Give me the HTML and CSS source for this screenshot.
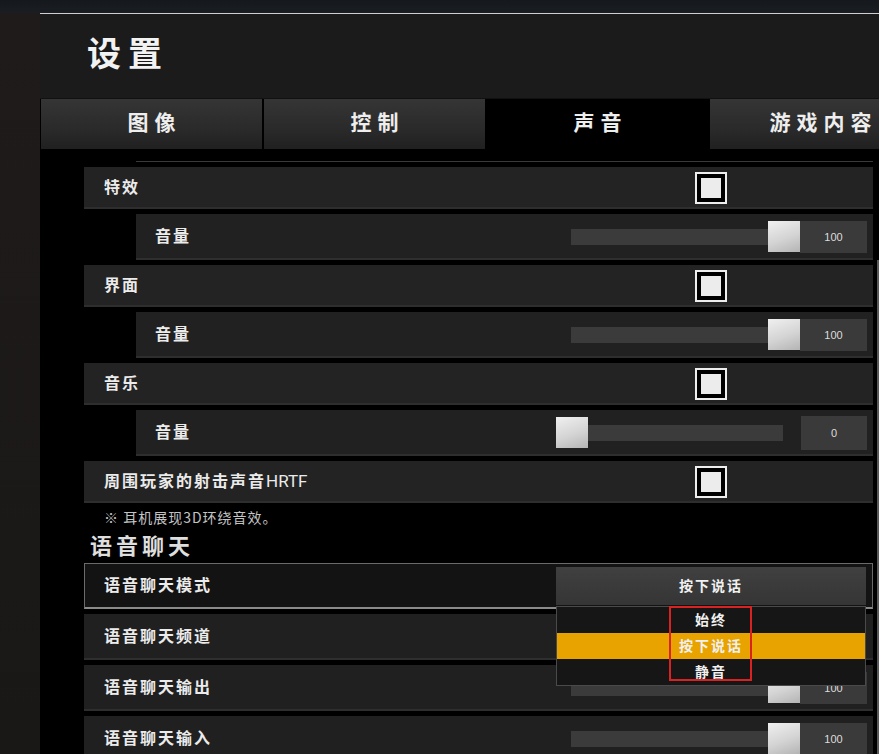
FILE: index.html
```html
<!DOCTYPE html>
<html lang="zh-CN">

<head>
  <meta charset='utf-8'>
  <title>设置</title>
  <link rel="stylesheet" href="styles.css">
</head>

<body>
  <div class='panel'>
    <div class='header'>
      <h1 class='title'>设置</h1>
    </div>
    <div class='tabs'>
      <div class='tab'>图像</div>
      <div class='tab'>控制</div>
      <div class='tab active'>声音</div>
      <div class='tab'>游戏内容</div>
    </div>

    <div class='content'>
      <div class='scrollbar'></div>
      <div class='list'>
        <div class='cut'></div>

        <div class='row'>
          <span class='label'>特效</span>
          <div class='check'><div class='tick'></div></div>
        </div>
        <div class='row sub'>
          <span class='label'>音量</span>
          <div class='slider'><div class='track'></div><div class='thumb'></div></div>
          <div class='val'>100</div>
        </div>

        <div class='row'>
          <span class='label'>界面</span>
          <div class='check'><div class='tick'></div></div>
        </div>
        <div class='row sub'>
          <span class='label'>音量</span>
          <div class='slider'><div class='track'></div><div class='thumb'></div></div>
          <div class='val'>100</div>
        </div>

        <div class='row'>
          <span class='label'>音乐</span>
          <div class='check'><div class='tick'></div></div>
        </div>
        <div class='row sub'>
          <span class='label'>音量</span>
          <div class='slider zero'><div class='track'></div><div class='thumb'></div></div>
          <div class='val zero'>0</div>
        </div>

        <div class='row'>
          <span class='label'>周围玩家的射击声音<span class='latin'>HRTF</span></span>
          <div class='check'><div class='tick'></div></div>
        </div>

        <div class='note'>※ 耳机展现3D环绕音效。</div>
        <h2 class='section'>语音聊天</h2>

        <div class='row voice mode'>
          <span class='label'>语音聊天模式</span>
          <div class='select'>按下说话</div>
          <div class='options'>
            <div class='opt'>始终</div>
            <div class='opt on'>按下说话</div>
            <div class='opt'>静音</div>
            <div class='mark'></div>
          </div>
        </div>
        <div class='row voice'>
          <span class='label'>语音聊天频道</span>
        </div>
        <div class='row voice'>
          <span class='label'>语音聊天输出</span>
          <div class='slider'><div class='track'></div><div class='thumb'></div></div>
          <div class='val'>100</div>
        </div>
        <div class='row voice'>
          <span class='label'>语音聊天输入</span>
          <div class='slider'><div class='track'></div><div class='thumb'></div></div>
          <div class='val'>100</div>
        </div>
      </div>
    </div>
  </div>
</body>

</html>
```

FILE: styles.css
```css
* {
  margin: 0;
  padding: 0;
  box-sizing: border-box;
}

html,
body {
  height: 100%;
  overflow: hidden;
}

body {
  background: linear-gradient(180deg, #15191d 0, #1a1d21 13px, #1e1b1a 13px, #1a1817 100%);
  font-family: "Noto Sans CJK SC", "Noto Sans", sans-serif;
  color: #ececec;
}

.panel {
  margin: 13px 0 0 40px;
  width: 839px;
  height: 741px;
  border-top: 1px solid #cfcfcf;
  overflow: hidden;
  background: #000;
}

.header {
  height: 84px;
  background: #1b1b1b;
  padding: 17px 0 0 47px;
}

.title {
  font-size: 34px;
  line-height: 42px;
  font-weight: 700;
  letter-spacing: 7px;
  color: #f2f2f2;
}

/* 标签页 */
.tabs {
  display: flex;
  gap: 2px;
  height: 51px;
  padding-left: 1px;
  background: #000;
  border-top: 1px solid #111;
}

.tab {
  flex: 0 0 221px;
  display: flex;
  align-items: center;
  justify-content: center;
  padding: 0 0 6px 6px;
  background: linear-gradient(180deg, #353535 0%, #2a2a2a 60%, #202020 100%);
  font-size: 21px;
  font-weight: 700;
  letter-spacing: 6px;
  color: #eee;
}

.tab.active {
  background: #000;
}

.content {
  position: relative;
  height: 606px;
  padding: 12px 6px 0 44px;
}

.scrollbar {
  position: absolute;
  right: 0;
  top: 111px;
  bottom: 0;
  width: 2px;
  background: #5a5a5a;
}

.list {
  display: flex;
  flex-direction: column;
  gap: 5px;
}

.cut {
  height: 1px;
  margin-left: 52px;
  background: #3a3a3a;
}

.row {
  position: relative;
  display: flex;
  align-items: center;
  height: 42px;
  padding: 0 6px 0 20px;
  background: #232323;
  box-shadow: inset 0 -2px 0 #2e2e2e;
}

.row.sub {
  height: 46px;
  margin-left: 52px;
  padding-left: 19px;
  background: #212121;
}

.label {
  flex: 1;
  padding-bottom: 4px;
  font-size: 16px;
  font-weight: 700;
  letter-spacing: 2px;
  color: #ebebeb;
}

.latin {
  font-family: "Liberation Sans Narrow", "Roboto", sans-serif;
  font-weight: 400;
  letter-spacing: 0;
  font-size: 17px;
}

/* 复选框 */
.check {
  width: 32px;
  height: 32px;
  margin-right: 140px;
  border: 2px solid #eee;
  background: #000;
  padding: 4px;
}

.tick {
  width: 20px;
  height: 20px;
  background: #ececec;
}

/* 滑块 */
.slider {
  position: relative;
  width: 229px;
  height: 32px;
  display: flex;
  align-items: center;
}

.track {
  flex: 1;
  height: 16px;
  background: #3b3b3b;
}

.thumb {
  position: absolute;
  top: 0;
  right: 0;
  width: 32px;
  height: 31px;
  background: linear-gradient(160deg, #f0f0f0 0%, #d4d4d4 55%, #b4b4b4 100%);
}

.slider.zero {
  width: 227px;
  height: 34px;
  margin-right: 18px;
  margin-left: -15px;
}

.slider.zero .thumb {
  left: 0;
  right: auto;
  top: 1px;
}

.val {
  width: 67px;
  height: 32px;
  display: flex;
  align-items: center;
  justify-content: center;
  background: #3a3a3a;
  font-family: "Liberation Sans", sans-serif;
  font-size: 11px;
  color: #dcdcdc;
}

.val.zero {
  width: 66px;
  height: 34px;
}

.note {
  padding-left: 20px;
  font-size: 14px;
  line-height: 18px;
  letter-spacing: 1px;
  color: #c4c4c4;
}

.section {
  padding-left: 6px;
  font-size: 22px;
  line-height: 27px;
  font-weight: 700;
  letter-spacing: 4px;
  color: #dedede;
}

.row.voice {
  height: 46px;
  background: #202020;
}

.row.mode {
  background: #131313;
  border: 1px solid #6a6a6a;
  border-bottom: 2px solid #8a8a8a;
  box-shadow: none;
  padding-left: 19px;
}

/* 下拉框 */
.select {
  position: absolute;
  left: 471px;
  top: 3px;
  width: 310px;
  height: 38px;
  display: flex;
  align-items: center;
  justify-content: center;
  padding-bottom: 3px;
  background: linear-gradient(180deg, #404040 0%, #353535 100%);
  font-size: 14px;
  font-weight: 700;
  letter-spacing: 2px;
  color: #f0f0f0;
}

.options {
  position: absolute;
  left: 471px;
  top: 42px;
  width: 310px;
  z-index: 2;
  background: #161616;
  border: 1px solid #4a4a4a;
}

.opt {
  height: 26px;
  display: flex;
  align-items: center;
  justify-content: center;
  padding-bottom: 3px;
  font-size: 14px;
  font-weight: 700;
  letter-spacing: 2px;
  color: #f0f0f0;
}

.opt.on {
  background: #e8a300;
}

.mark {
  position: absolute;
  left: 112px;
  top: -1px;
  width: 83px;
  height: 75px;
  border: 2px solid #d92222;
}
```
